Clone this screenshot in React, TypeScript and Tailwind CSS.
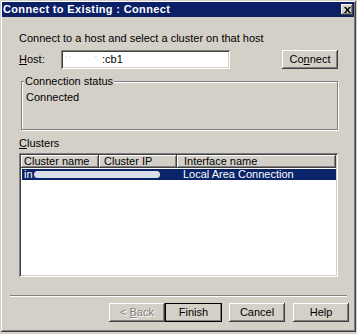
import React from "react";

const raised =
  "shadow-[inset_-1px_-1px_0_#404040,inset_1px_1px_0_#ffffff,inset_-2px_-2px_0_#808080]";

function Btn({
  children,
  w,
  def,
  disabled,
}: {
  children: React.ReactNode;
  w: string;
  def?: boolean;
  disabled?: boolean;
}) {
  return (
    <div
      className={`h-[19px] ${w} flex items-center justify-center bg-[#d4d0c8] ${raised} ${
        def ? "outline outline-1 outline-black -outline-offset-1" : ""
      } ${disabled ? "text-[#808080] [text-shadow:1px_1px_0_#ffffff]" : "text-black"}`}
    >
      {children}
    </div>
  );
}

export default function App() {
  return (
    <div className="w-[357px] h-[334px] bg-[#d4d0c8] font-['Liberation_Sans',Arial,sans-serif] text-[11px] leading-[13px] text-black overflow-hidden">
      <div className="w-[356px] h-[332px] p-[2px] bg-[#d4d0c8] shadow-[inset_1px_1px_0_#d4d0c8,inset_-1px_-1px_0_#404040,inset_2px_2px_0_#ffffff,inset_-2px_-2px_0_#808080] flex flex-col">
        {/* title bar */}
        <div className="h-[15px] bg-[#0c2068] flex items-center justify-between pl-[1px] pr-[1px]">
          <span className="text-white font-bold text-[11px] leading-[13px] tracking-[0.35px]">
            Connect to Existing : Connect
          </span>
          <div className={`w-[12px] h-[11px] bg-[#d4d0c8] ${raised} flex items-center justify-center`}>
            <svg width="7" height="6" viewBox="0 0 7 6">
              <path d="M0 0h2l1.5 2L5 0h2L4.5 3 7 6H5L3.5 4 2 6H0l2.5-3z" fill="#000" />
            </svg>
          </div>
        </div>

        {/* body */}
        <div className="pl-[17px] pr-[16px] flex flex-col">
          <div className="mt-[15px]">Connect to a host and select a cluster on that host</div>

          <div className="mt-[5px] flex items-center h-[19px]">
            <div className="w-[42px]">
              <span className="underline underline-offset-1">H</span>ost:
            </div>
            <div className="w-[169px] h-[19px] bg-white shadow-[inset_1px_1px_0_#808080,inset_-1px_-1px_0_#ffffff,inset_2px_2px_0_#404040,inset_-2px_-2px_0_#d4d0c8] flex items-center relative">
              <span className="absolute left-[4px] top-[5px] text-[#c8c8c8] text-[8px] leading-[8px]">' '</span>
              <span className="absolute left-[34px] top-[5px] text-[#c8c8c8] text-[8px] leading-[8px]">'</span>
              <span className="ml-[41px]">:cb1</span>
            </div>
            <div className="flex-1" />
            <Btn w="w-[56px]">
              <span>
                Co<span className="underline underline-offset-1">n</span>nect
              </span>
            </Btn>
          </div>

          <fieldset className="mt-[6px] ml-[2px] h-[55px] border border-[#808080] shadow-[inset_1px_1px_0_#ffffff,1px_1px_0_#ffffff] px-[4px]">
            <legend className="px-[1px] ml-[-2px] bg-[#d4d0c8] leading-[13px]">Connection status</legend>
            <div className="mt-[3px] ml-[0px]">Connected</div>
          </fieldset>

          <div className="mt-[7px]">
            <span className="underline underline-offset-1">C</span>lusters
          </div>

          <div className="mt-[3px] h-[124px] bg-white p-[2px] shadow-[inset_1px_1px_0_#808080,inset_-1px_-1px_0_#ffffff,inset_2px_2px_0_#404040,inset_-2px_-2px_0_#d4d0c8] flex flex-col">
            <div className="flex h-[13px] leading-[13px]">
              <div className={`w-[78px] bg-[#d4d0c8] ${raised} pl-[3px]`}>Cluster name</div>
              <div className={`w-[78px] bg-[#d4d0c8] ${raised} pl-[5px]`}>Cluster IP</div>
              <div className={`flex-1 bg-[#d4d0c8] ${raised} pl-[7px]`}>Interface name</div>
            </div>
            <div className="mt-[1px] ml-[1px] h-[11px] bg-[#0a246a] text-white flex items-center leading-[11px] relative">
              <div className="w-[156px] pl-[2px] flex items-center">
                <span>in</span>
                <div className="ml-[1px] h-[7px] w-[126px] bg-white/85 rounded-full" />
              </div>
              <div className="pl-[5px]">Local Area Connection</div>
            </div>
          </div>
        </div>

        {/* separator */}
        <div className="mt-[18px] ml-[8px] mr-[7px] h-[2px] border-t border-[#808080] border-b border-b-white" />

        {/* buttons */}
        <div className="mt-[6px] flex justify-end pr-[5px]">
          <Btn w="w-[56px]" disabled>
            <span>
              &lt; <span className="underline underline-offset-1">B</span>ack
            </span>
          </Btn>
          <Btn w="w-[57px]" def>
            Finish
          </Btn>
          <div className="w-[7px]" />
          <Btn w="w-[56px]">Cancel</Btn>
          <div className="w-[8px]" />
          <Btn w="w-[56px]">Help</Btn>
        </div>
      </div>
    </div>
  );
}
